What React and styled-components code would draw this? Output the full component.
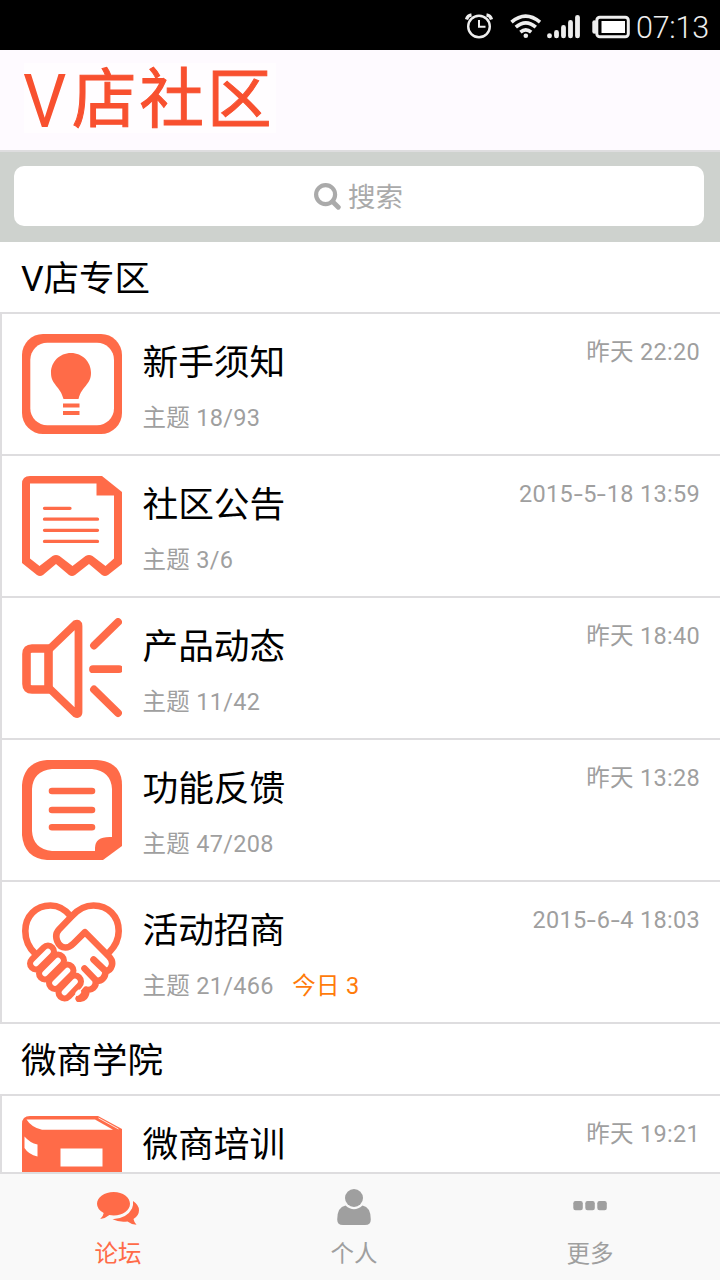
import React from "react";
import styled, { createGlobalStyle } from "styled-components";

const ORANGE = "#ff6b48";
const LINE = "#dedddf";
const GRAY = "#9f9f9f";

const GlobalStyle = createGlobalStyle`
    * {
        box-sizing: border-box;
    }
    body {
        margin: 0;
        background: #fff;
        font-family: Roboto, "Noto Sans CJK SC", sans-serif;
    }
    svg {
        display: block;
        flex-shrink: 0;
    }
`;

//---styled-------------------------------------------

const Page = styled.div`
    display: flex;
    flex-direction: column;
    width: 720px;
    height: 1280px;
    overflow: hidden;
    background: #fff;
`;
const StatusBar = styled.div`
    display: flex;
    flex-shrink: 0;
    height: 50px;
    background: #000;
    color: #eee;
    padding-right: 11px;
    justify-content: flex-end;
`;
const Clock = styled.span`
    margin-left: 5px;
    font-size: 30.5px;
    font-weight: 300;
    line-height: 55px;
    letter-spacing: -0.2px;
`;
const Header = styled.header`
    display: flex;
    flex-shrink: 0;
    height: 102px;
    padding-left: 24px;
    padding-top: 13px;
    background: #fefaff;
    border-bottom: 2px solid ${LINE};
`;
const Logo = styled.h1`
    display: flex;
    margin: 0;
    width: 252px;
    height: 70px;
    background: #fffdff;
    color: #f8502f;
    font-weight: 400;
    white-space: nowrap;
`;
const LogoLatin = styled.span`
    width: 49px;
    margin-left: -1px;
    font-size: 75px;
    line-height: 76px;
    transform: scaleX(0.91);
    transform-origin: 0 0;
`;
const LogoHan = styled.span`
    font-size: 64.5px;
    line-height: 74px;
    letter-spacing: 3px;
    -webkit-text-stroke: 1px #f8502f;
`;
const SearchBand = styled.div`
    flex-shrink: 0;
    height: 90px;
    padding: 14px 16px 16px 14px;
    background: #ced2ce;
`;
const SearchBox = styled.div`
    display: flex;
    align-items: center;
    justify-content: center;
    gap: 7px;
    height: 60px;
    padding-right: 1px;
    border-radius: 10px;
    background: #fff;
    color: #aaa;
    font-size: 27.5px;
`;
const SearchLabel = styled.span`
    padding-top: 3px;
    line-height: 60px;
`;
const Content = styled.main`
    flex: 1;
    min-height: 0;
    overflow: hidden;
`;
const SectionTitle = styled.h2`
    margin: 0;
    height: 70px;
    padding-left: 21px;
    font-size: 35.5px;
    font-weight: 400;
    line-height: 74px;
    color: #000;
`;
const List = styled.div`
    border-left: 2px solid ${LINE};
    border-bottom: 2px solid ${LINE};
`;
const Row = styled.div`
    display: flex;
    height: 142px;
    padding: 20px 20px 0;
    border-top: 2px solid ${LINE};
`;
const Info = styled.div`
    flex: 1;
    padding-left: 20.5px;
`;
const Name = styled.div`
    height: 54px;
    font-size: 35.7px;
    line-height: 58px;
    color: #000;
`;
const Meta = styled.div`
    display: flex;
    gap: 18.5px;
    font-size: 23.5px;
    line-height: 60px;
    letter-spacing: 0.3px;
    color: ${GRAY};
`;
const Today = styled.span`
    color: #ff7b0a;
`;
const Time = styled.div`
    font-size: 23.5px;
    line-height: 37px;
    letter-spacing: 0.3px;
    color: ${GRAY};
`;
const Dash = styled.span`
    display: inline-block;
    margin: 0 1.7px;
    transform: scaleX(1.4);
`;
const TabBar = styled.nav`
    display: flex;
    flex-shrink: 0;
    height: 108px;
    padding-right: 12px;
    background: #f9f9f9;
    border-top: 2px solid ${LINE};
`;
const Tab = styled.div`
    display: flex;
    flex: 1;
    flex-direction: column;
    align-items: center;
    gap: 7px;
    padding-top: 15px;
    font-size: 23.5px;
    line-height: 44px;
    color: ${(props) => (props.$active ? ORANGE : GRAY)};
`;

//---icons--------------------------------------------

const StatusIcons = () => (
    <svg width='170' height='50' viewBox='461 0 170 50' fill='none' stroke='#eee'>
        <circle cx='479' cy='26.5' r='10.8' strokeWidth='2.4' />
        <path d='M479 20v6.8h6.5' strokeWidth='2' />
        <path d='M466.5 19.5q1-4 5-4.6M491.5 19.5q-1-4-5-4.6' strokeWidth='3.2' />
        <path d='M511.5 22.2q14-12 28.5 0' strokeWidth='3.6' />
        <path d='M515.8 27.2q10-8.6 20 0' strokeWidth='3.6' />
        <path d='M520.4 32.2q5.4-4.6 10.8 0' strokeWidth='3.6' />
        <circle cx='525.8' cy='35.7' r='2.3' fill='#eee' stroke='none' />
        <path
            d='M549.5 35.6v.3M556.5 32.5v3.4M563.5 27.5v8.4M570.5 22.5v13.4M577.5 17.3v18.6'
            strokeWidth='4.8'
            strokeLinecap='round'
        />
        <rect x='596.8' y='17.3' width='31.5' height='19.4' rx='3' strokeWidth='3' />
        <path d='M594.5 22.5v9' strokeWidth='4.4' strokeLinecap='round' />
        <rect x='601.5' y='21' width='23.5' height='12' fill='#fff' stroke='none' />
    </svg>
);

const SearchIcon = () => (
    <svg width='27' height='27' viewBox='0 0 27 27' fill='none' stroke='#aaa'>
        <circle cx='11.6' cy='11.6' r='9.5' strokeWidth='4.2' />
        <path d='M18.5 18.5l5.8 5.8' strokeWidth='4.8' strokeLinecap='round' />
    </svg>
);

const BulbIcon = () => (
    <svg width='100' height='100' viewBox='0 0 100 100' fill={ORANGE}>
        <rect width='100' height='100' rx='21' />
        <rect x='8.3' y='8.7' width='83.7' height='82.6' rx='17' fill='#fff' />
        <path d='M49 19C60.500 19 69 28 69 38.700 69 51 59.500 52 56.500 65H41.500C38.500 52 29 51 29 38.700 29 28 37.500 19 49 19z' />
        <path d='M41 69.5h16.5v4H41zM41 77h16.5v4H41z' />
    </svg>
);

const NoticeIcon = () => (
    <svg width='100' height='100' viewBox='0 0 100 100' fill={ORANGE}>
        <path d='M8 0h72l20 16v72L86 99q-3 2-6 0L67 88 53 99q-3 2-6 0L34 88 21 99q-3 2-6 0L0 87V8q0-8 8-8z' />
        <path
            d='M8 7.5h66.5v12H92v63l-8.500 7.500-13-10q-3.500-2-7 0L50.500 90 37.500 80q-3.500-2-7 0L17.500 90 8 82.500z'
            fill='#fff'
        />
        <path
            d='M22.5 32.3h25.5M22.5 43.2h53M22.5 54.3h53M22.5 65.4h53'
            stroke={ORANGE}
            strokeWidth='3.3'
            strokeLinecap='round'
        />
    </svg>
);

const SpeakerIcon = () => (
    <svg
        width='100'
        height='100'
        viewBox='0 0 100 100'
        fill='none'
        stroke={ORANGE}
        strokeWidth='7.8'
        strokeLinecap='round'
        strokeLinejoin='round'
    >
        <path d='M4.5 36q0-5.500 5.500-5.500H26.500V71.500H10Q4.500 71.500 4.500 66z' strokeWidth='8.6' />
        <path d='M28 30.5L53.5 6q3-1.500 3 2v86q0 3-3 1.500L28 71' />
        <path d='M72 27.5L96 4M71 51.2h26M72 71.500l24 23.500' />
    </svg>
);

const FeedbackIcon = () => (
    <svg width='100' height='100' viewBox='0 0 100 100' fill={ORANGE}>
        <path d='M25 0h50q25 2 25 25v61L81 100H25Q2 98 0 75V25Q2 2 25 0z' />
        <path d='M30 9h40q19 2 20 20v48q-17-1-17 11v3H30Q11 89 10 71V29Q11 11 30 9z' fill='#fff' />
        <path
            d='M30 31h40M30 50h40M30 67.2h40'
            stroke={ORANGE}
            strokeWidth='6.6'
            strokeLinecap='round'
        />
    </svg>
);

const fingers = [
    "M14 61.5L26 49.5",
    "M23 71.5L36 58.5",
    "M33 81L45.5 68.5",
    "M42.5 90.5L53 79.5",
];

const HandshakeIcon = () => (
    <svg
        width='100'
        height='100'
        viewBox='0 0 100 100'
        fill='none'
        stroke={ORANGE}
        strokeWidth='6.6'
        strokeLinecap='round'
        strokeLinejoin='round'
    >
        <path d='M13.500 52C6 45 3.300 37 3.300 29 3.300 14 14 3.500 28.500 3.500 37 3.500 43 7 49 14.500' />
        <path d='M87 50.500C94 43.500 96.700 37 96.700 29 96.700 14 86 3.500 71.500 3.500 62 3.500 55.500 8 50 14L37 27.500C31 34 36 45.500 43.500 45.500 47 45.500 49 44 51.500 41.500L63 30.200 87 54.500c6 6 2.500 14-3.500 15 0 6-4 10-9.500 9.500 0 6-4 9.500-9.500 9 0 6-3 9-7.500 8.700' />
        <path d='M71.500 57.500L83.500 69M62.500 66.500L74 78.500' />
        {fingers.map((d) => (
            <path key={d} d={d} strokeWidth='18' />
        ))}
        {fingers.map((d) => (
            <path key={d} d={d} stroke='#fff' strokeWidth='5.6' />
        ))}
        <path d='M57 96.500L64 88' strokeWidth='7' />
        <path d='M55.500 91.500l1.500-1.500' stroke='#fff' strokeWidth='4.5' />
    </svg>
);

const BoxIcon = () => (
    <svg width='100' height='100' viewBox='0 0 100 100' fill={ORANGE}>
        <path d='M8 0h68l24 13v87H0V8q0-8 8-8z' />
        <path d='M4.5 3.5H73l18 10.300H20Q9.500 11.500 4.500 3.500z' fill='#fff' />
        <path d='M76.5 2l20 11' stroke='#fff' strokeWidth='0.8' />
        <path d='M2.500 20.500Q8 27 15.500 28.500V40.500Q6.500 38.500 2.500 32z' fill='#fff' />
        <path d='M38.500 32.500h42v18h-42z' fill='#fff' />
    </svg>
);

const ForumIcon = () => (
    <svg width='42' height='36' viewBox='0 0 42 36' fill='currentColor'>
        <path d='M16.700 3C26 3 33 8.200 33 14.800s-7 11.700-16.300 11.700q-2.300 0-4.300-.4Q8.500 29.500 3.200 30q3-2.500 3.500-6Q0 20.500 0 14.800C0 8.200 7.400 3 16.700 3z' />
        <path d='M36 12q6 4 6 9.200 0 5.300-5.500 8.800.6 3.300 3 5.800-5.500-.4-9-3.300-8.500 1.100-15-2.200Q30 29.500 35 19.500 36.500 16 36 12z' />
    </svg>
);

const PersonIcon = () => (
    <svg width='34' height='36' viewBox='0 0 34 36' fill='currentColor'>
        <circle cx='17' cy='9' r='9' />
        <path d='M8.500 16.500Q17 24 25.500 16.500 33.800 18 33.800 30.500 33.800 36 28 36H6Q.2 36 .2 30.500.2 18 8.500 16.500z' />
    </svg>
);

const MoreIcon = () => (
    <svg width='34' height='36' viewBox='0 0 34 36' fill='currentColor'>
        <rect x='0.3' y='12' width='9.5' height='9.3' rx='2.2' />
        <rect x='12.3' y='12' width='9.5' height='9.3' rx='2.2' />
        <rect x='24.3' y='12' width='9.5' height='9.3' rx='2.2' />
    </svg>
);

//---data---------------------------------------------

const sections = [
    {
        title: "V店专区",
        boards: [
            { name: "新手须知", count: "18/93", time: "昨天 22:20", Icon: BulbIcon },
            { name: "社区公告", count: "3/6", time: "2015-5-18 13:59", Icon: NoticeIcon },
            { name: "产品动态", count: "11/42", time: "昨天 18:40", Icon: SpeakerIcon },
            { name: "功能反馈", count: "47/208", time: "昨天 13:28", Icon: FeedbackIcon },
            { name: "活动招商", count: "21/466", today: 3, time: "2015-6-4 18:03", Icon: HandshakeIcon },
        ],
    },
    {
        title: "微商学院",
        boards: [{ name: "微商培训", count: "", time: "昨天 19:21", Icon: BoxIcon }],
    },
];

const tabs = [
    { label: "论坛", Icon: ForumIcon },
    { label: "个人", Icon: PersonIcon },
    { label: "更多", Icon: MoreIcon },
];

// dates get wider dashes than the font has
const renderTime = (time) =>
    time.split("-").map((part, i) => (
        <React.Fragment key={i}>
            {i > 0 && <Dash>-</Dash>}
            {part}
        </React.Fragment>
    ));

//---
const App = () => {
    return (
        <Page>
            <GlobalStyle />
            <StatusBar>
                <StatusIcons />
                <Clock>07:13</Clock>
            </StatusBar>
            <Header>
                <Logo>
                    <LogoLatin>V</LogoLatin>
                    <LogoHan>店社区</LogoHan>
                </Logo>
            </Header>
            <SearchBand>
                <SearchBox>
                    <SearchIcon />
                    <SearchLabel>搜索</SearchLabel>
                </SearchBox>
            </SearchBand>
            <Content>
                {sections.map((section) => (
                    <section key={section.title}>
                        <SectionTitle>{section.title}</SectionTitle>
                        <List>
                            {section.boards.map(({ name, count, today, time, Icon }) => (
                                <Row key={name}>
                                    <Icon />
                                    <Info>
                                        <Name>{name}</Name>
                                        {count && (
                                            <Meta>
                                                <span>主题 {count}</span>
                                                {today && <Today>今日 {today}</Today>}
                                            </Meta>
                                        )}
                                    </Info>
                                    <Time>{renderTime(time)}</Time>
                                </Row>
                            ))}
                        </List>
                    </section>
                ))}
            </Content>
            <TabBar>
                {tabs.map(({ label, Icon }, i) => (
                    <Tab key={label} $active={i === 0}>
                        <Icon />
                        {label}
                    </Tab>
                ))}
            </TabBar>
        </Page>
    );
};

export default App;
